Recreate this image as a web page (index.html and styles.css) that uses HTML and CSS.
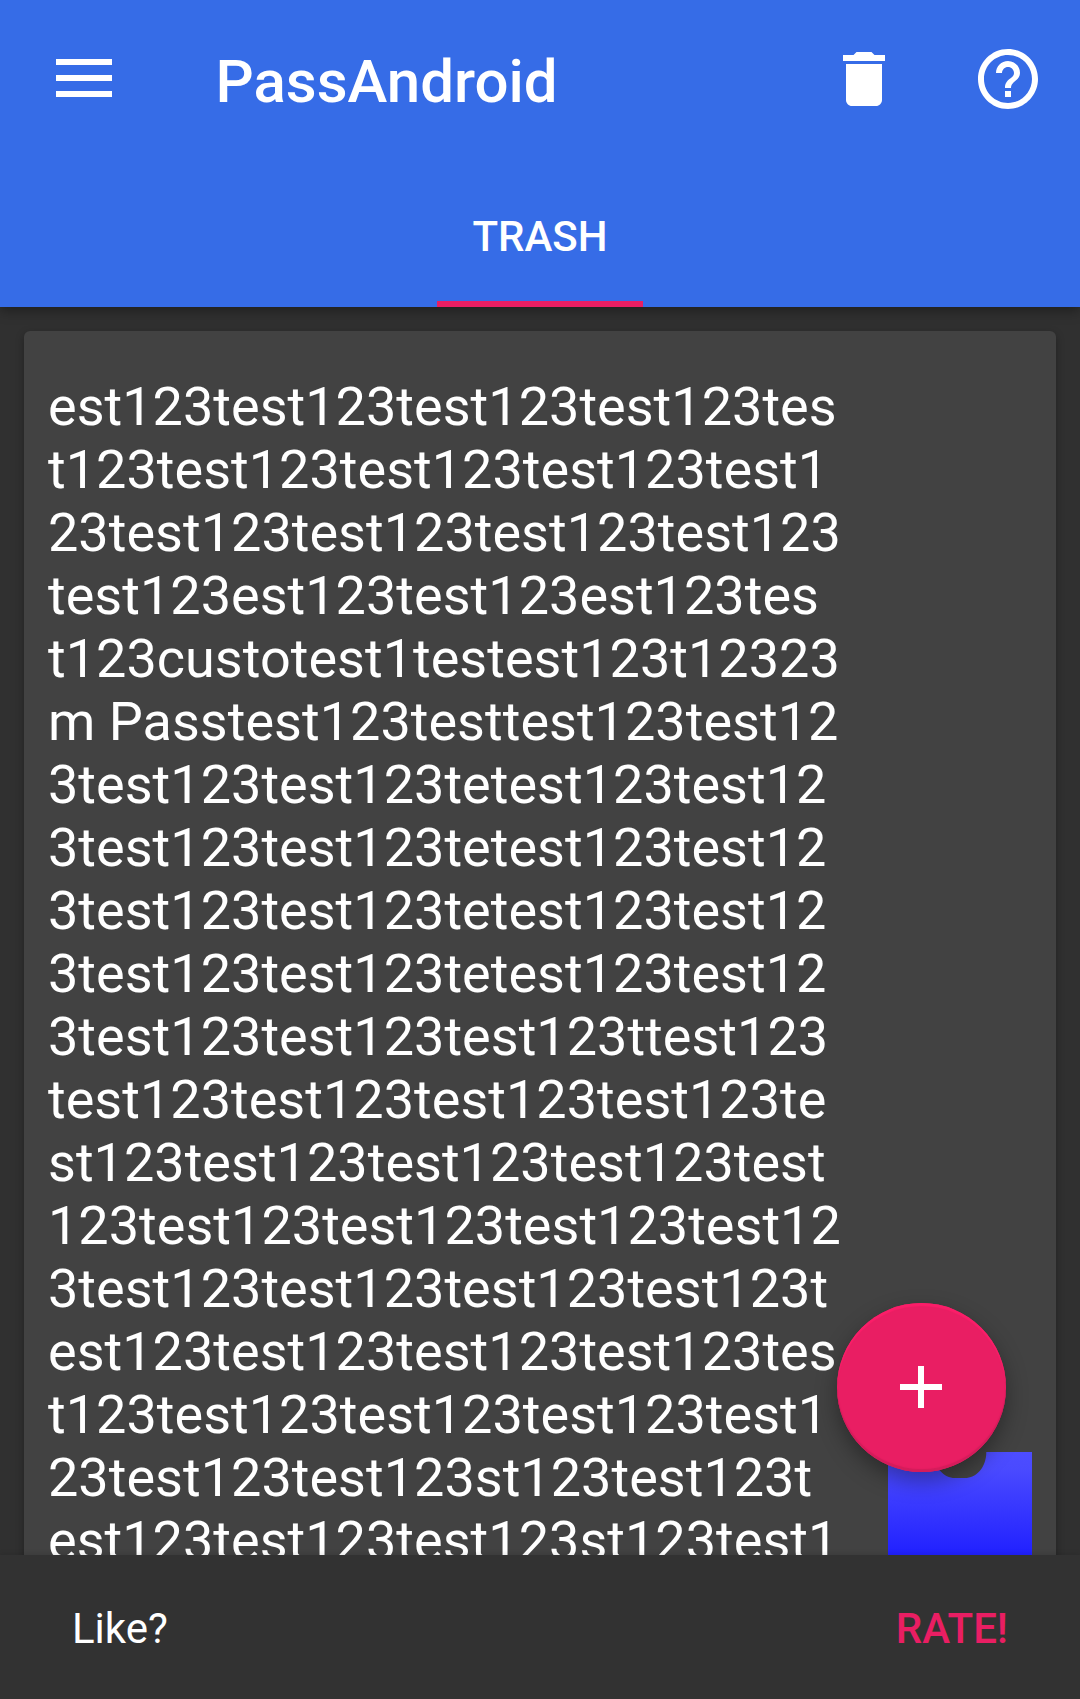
FILE: index.html
```html
<!DOCTYPE html>
<html lang="en">
<head>
<meta charset="utf-8">
<title>PassAndroid</title>
<link rel="stylesheet" href="styles.css">
</head>
<body>
<div class="app">
  <header class="header">
    <div class="toolbar">
      <svg class="menu" viewBox="0 0 56 40"><path d="M0 0h56v6H0zM0 16h56v6H0zM0 32h56v6H0z"/></svg>
      <h1 class="title">PassAndroid</h1>
      <svg class="icon trash" viewBox="0 0 24 24"><path d="M6 19c0 1.1.9 2 2 2h8c1.100 0 2-.9 2-2V7H6v12zM19 4h-3.500l-1-1h-5l-1 1H5v2h14V4z"/></svg>
      <svg class="icon help" viewBox="0 0 24 24"><path d="M11 18h2v-2h-2v2zm1-16C6.480 2 2 6.480 2 12s4.480 10 10 10 10-4.480 10-10S17.520 2 12 2zm0 18c-4.410 0-8-3.590-8-8s3.590-8 8-8 8 3.590 8 8-3.590 8-8 8zm0-14c-2.210 0-4 1.790-4 4h2c0-1.100.9-2 2-2s2 .9 2 2c0 2-3 1.750-3 5h2c0-2.250 3-2.500 3-5 0-2.210-1.790-4-4-4z"/></svg>
    </div>
    <nav class="tabs"><span class="tab">TRASH</span></nav>
  </header>
  <main class="content">
    <article class="card">
      <p class="text">est123test123test123test123tes<br>t123test123test123test123test1<br>23test123test123test123test123<br>test123est123test123est123tes<br>t123custotest1testest123t12323<br>m Passtest123testtest123test12<br>3test123test123tetest123test12<br>3test123test123tetest123test12<br>3test123test123tetest123test12<br>3test123test123tetest123test12<br>3test123test123test123ttest123<br>test123test123test123test123te<br>st123test123test123test123test<br>123test123test123test123test12<br>3test123test123test123test123t<br>est123test123test123test123tes<br>t123test123test123test123test1<br>23test123test123st123test123t<br>est123test123test123st123test1</p>
      <svg class="pass" viewBox="0 0 144 144"><defs><linearGradient id="g" x1="0" y1="0" x2="0" y2="1"><stop offset="0" stop-color="#4d4dff"/><stop offset=".12" stop-color="#4a4aff"/><stop offset=".72" stop-color="#2020ff"/></linearGradient></defs><path fill="url(#g)" d="M0 0H46C46 16 56 26 67 26H77C88 26 98.300 16 98.300 0H144V144H0z"/></svg>
    </article>
    <button class="fab" aria-label="Add"><svg viewBox="0 0 42 42"><path d="M18 0h6v18h18v6H24v18h-6V24H0v-6h18z"/></svg></button>
  </main>
  <footer class="snackbar"><span>Like?</span><a class="rate">RATE!</a></footer>
</div>
</body>
</html>
```
FILE: styles.css
```css
* { box-sizing: border-box; }
body { margin: 0; font-family: Roboto, sans-serif; color: #fff; }
.app { width: 1080px; height: 1699px; display: flex; flex-direction: column; overflow: hidden; background: #303030; }
.header { height: 307px; background: #366ce7; box-shadow: 0 3px 12px rgba(0,0,0,.4); position: relative; z-index: 1; display: flex; flex-direction: column; }
.toolbar { height: 158px; flex: none; display: flex; align-items: center; padding-left: 56px; }
svg { fill: currentColor; flex: none; display: block; }
.menu { width: 56px; height: 40px; }
.title { margin: 6px auto 0 103.5px; font-size: 60px; font-weight: 500; line-height: 70px; }
.icon { width: 72px; height: 72px; }
.trash { margin-right: 72px; }
.help { margin-right: 36px; }
.tabs { flex: 1; display: flex; justify-content: center; }
.tab { width: 206px; padding-top: 14px; border-bottom: 6px solid #e91e63; text-align: center; font-size: 42px; font-weight: 500; line-height: 129px; }
.content { flex: 1; min-height: 0; padding: 24px 24px 0; position: relative; }
.card { height: 1300px; background: #424242; border-radius: 6px; padding: 44px 24px; display: flex; justify-content: space-between; box-shadow: 0 3px 9px rgba(0,0,0,.3); }
.text { margin: 0; font-size: 54px; line-height: 63px; letter-spacing: .02px; white-space: nowrap; }
.pass { width: 144px; height: 144px; margin-top: 1077px; }
.fab { position: absolute; left: 836.5px; top: 995.5px; width: 169px; height: 169px; padding: 0; border: 0; border-radius: 50%; background: #e91e63; color: #fff; display: flex; align-items: center; justify-content: center; box-shadow: inset 0 3px 1px #fb1e69, inset 0 -3px 1px #d41c5b, 0 9px 21px rgba(0,0,0,.35); }
.fab svg { width: 42px; height: 42px; }
.snackbar { height: 144px; background: #323232; position: relative; z-index: 2; display: flex; align-items: center; justify-content: space-between; padding: 2px 72px 0; font-size: 42px; box-shadow: 0 0 6px rgba(0,0,0,.15); }
.rate { color: #e91e63; font-weight: 500; }
```
